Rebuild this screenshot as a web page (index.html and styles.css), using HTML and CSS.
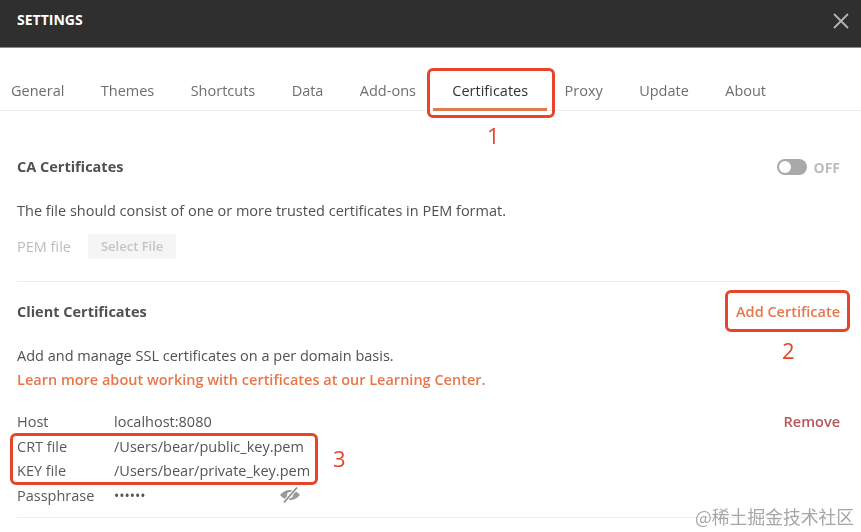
FILE: index.html
```html
<!DOCTYPE html>
<html lang="en">
<head>
<meta charset="utf-8">
<title>Settings</title>
<link rel="stylesheet" href="styles.css">
</head>
<body>
<div class="app">
  <header class="titlebar">
    <span class="title">SETTINGS</span>
    <svg class="close" width="16" height="16" viewBox="0 0 16 16"><path d="M1 1 15 15M15 1 1 15" stroke="#b4b4b4" stroke-width="1.8" fill="none"/></svg>
  </header>
  <nav class="tabs">
    <span class="tab">General</span>
    <span class="tab">Themes</span>
    <span class="tab">Shortcuts</span>
    <span class="tab">Data</span>
    <span class="tab">Add-ons</span>
    <span class="tab active">Certificates</span>
    <span class="tab">Proxy</span>
    <span class="tab">Update</span>
    <span class="tab">About</span>
  </nav>
  <main class="content">
    <section class="ca">
      <div class="head">
        <h2>CA Certificates</h2>
        <div class="toggle"><span class="switch"><span class="knob"></span></span><span class="off">OFF</span></div>
      </div>
      <p class="desc">The file should consist of one or more trusted certificates in PEM format.</p>
      <div class="pem"><span class="pem-label">PEM file</span><span class="select">Select File</span></div>
    </section>
    <section class="client">
      <div class="head">
        <h2>Client Certificates</h2>
        <span class="add">Add Certificate</span>
      </div>
      <p class="desc add-desc">Add and manage SSL certificates on a per domain basis.</p>
      <p class="learn">Learn more about working with certificates at our Learning Center.</p>
      <div class="cert">
        <div class="row"><span class="key">Host</span><span class="val">localhost:8080</span><span class="remove">Remove</span></div>
        <div class="row"><span class="key">CRT file</span><span class="val">/Users/bear/public_key.pem</span></div>
        <div class="row"><span class="key">KEY file</span><span class="val">/Users/bear/private_key.pem</span></div>
        <div class="row"><span class="key">Passphrase</span><span class="val dots">••••••</span>
          <svg class="eye" width="22" height="18" viewBox="0 0 22 18"><path d="M1 9C4 5.500 7 4 11 4s7 1.500 10 5C18 12.500 15 14 11 14S4 12.500 1 9Z" fill="#9a9a9a"/><circle cx="11" cy="9" r="3" fill="#fff"/><path d="M18 1.500 5 16.500" stroke="#fff" stroke-width="3.500"/><path d="M18 1.500 5 16.500" stroke="#8f8f8f" stroke-width="1.800"/></svg>
        </div>
      </div>
    </section>
  </main>
  <div class="note n1"></div><span class="num d1">1</span>
  <div class="note n2"></div><span class="num d2">2</span>
  <div class="note n3"></div><span class="num d3">3</span>
  <span class="mark">@稀土掘金技术社区</span>
</div>
</body>
</html>
```
FILE: styles.css
```css
* { box-sizing: border-box; }
html, body { margin: 0; padding: 0; }
body { background: #fff; font-family: "Open Sans", "Liberation Sans", sans-serif; font-size: 14.500px; color: #505050; }
.app { position: relative; width: 861px; height: 532px; overflow: hidden; filter: blur(0.35px); }
.titlebar { height: 48px; background: #2f2f2f; border-bottom: 1px solid #8c8c8c; display: flex; align-items: center; justify-content: space-between; padding: 0 12px 6px 17px; }
.title { color: #fff; font-size: 14px; font-weight: 700; margin-top: -3px; }
.close { margin-top: 1px; }
.tabs { height: 63px; border-bottom: 1px solid #ececec; display: flex; gap: 36.400px; padding: 0 0 0 11px; }
.tab { line-height: 20px; margin-top: 33px; height: 30px; color: #6e6e6e; }
.tab.active { color: #333; border-bottom: 3px solid #e27a50; margin-left: -19px; margin-right: -19px; padding: 0 19px; }
.content { padding: 0 21px 0 17px; }
.head { display: flex; justify-content: space-between; align-items: center; height: 24px; }
h2 { margin: 0; font-size: 14.500px; font-weight: 700; color: #505050; line-height: 24px; }
.ca { padding-top: 44px; height: 171px; border-bottom: 1px solid #ececec; }
.toggle { display: flex; align-items: center; gap: 6px; }
.switch { display: block; width: 30px; height: 16px; border-radius: 8px; background: #a9a9a9; padding: 2px; }
.knob { display: block; width: 12px; height: 12px; border-radius: 50%; background: #fff; }
.off { font-size: 14px; font-weight: 700; color: #bdbdbd; }
.desc { margin: 22px 0 0; line-height: 20px; color: #505050; }
.pem { display: flex; align-items: center; gap: 17px; margin-top: 13px; }
.pem-label { color: #bcbcbc; }
.select { display: block; background: #f5f5f5; color: #c4c4c4; font-size: 13px; font-weight: 600; padding: 0 13px; height: 25px; line-height: 25px; border-radius: 3px; }
.client { padding-top: 18px; }
.add { color: #e2784e; font-weight: 600; margin-top: -2px; }
.add-desc { margin-top: 22px; }
.learn { margin: 4px 0 0; line-height: 20px; font-weight: 600; color: #e9764a; }
.cert { margin-top: 19.600px; padding-bottom: 9.400px; border-bottom: 1px solid #ececec; width: 823px; }
.row { display: flex; align-items: center; height: 24.500px; position: relative; }
.key { width: 97px; color: #5a5a5a; }
.val { color: #555; }
.dots { font-size: 14px; }
.remove { margin-left: auto; color: #b5565a; font-weight: 600; }
.eye { position: absolute; left: 262px; top: 3px; }
.note { position: absolute; border: 3px solid #e8442a; border-radius: 6px; }
.n1 { left: 427px; top: 68px; width: 128px; height: 50px; }
.n2 { left: 725px; top: 290px; width: 125px; height: 42px; }
.n3 { left: 10px; top: 433px; width: 308px; height: 52px; }
.num { position: absolute; color: #e8442a; font-size: 22px; line-height: 28px; }
.d1 { left: 487px; top: 121px; }
.d2 { left: 782px; top: 336px; }
.d3 { left: 333px; top: 444px; }
.mark { position: absolute; left: 695px; top: 504px; font-size: 17.800px; line-height: 24px; color: #a6a6a6; font-family: "Noto Sans CJK SC", sans-serif; text-shadow: 0 0 2px #fff; white-space: nowrap; }
```
